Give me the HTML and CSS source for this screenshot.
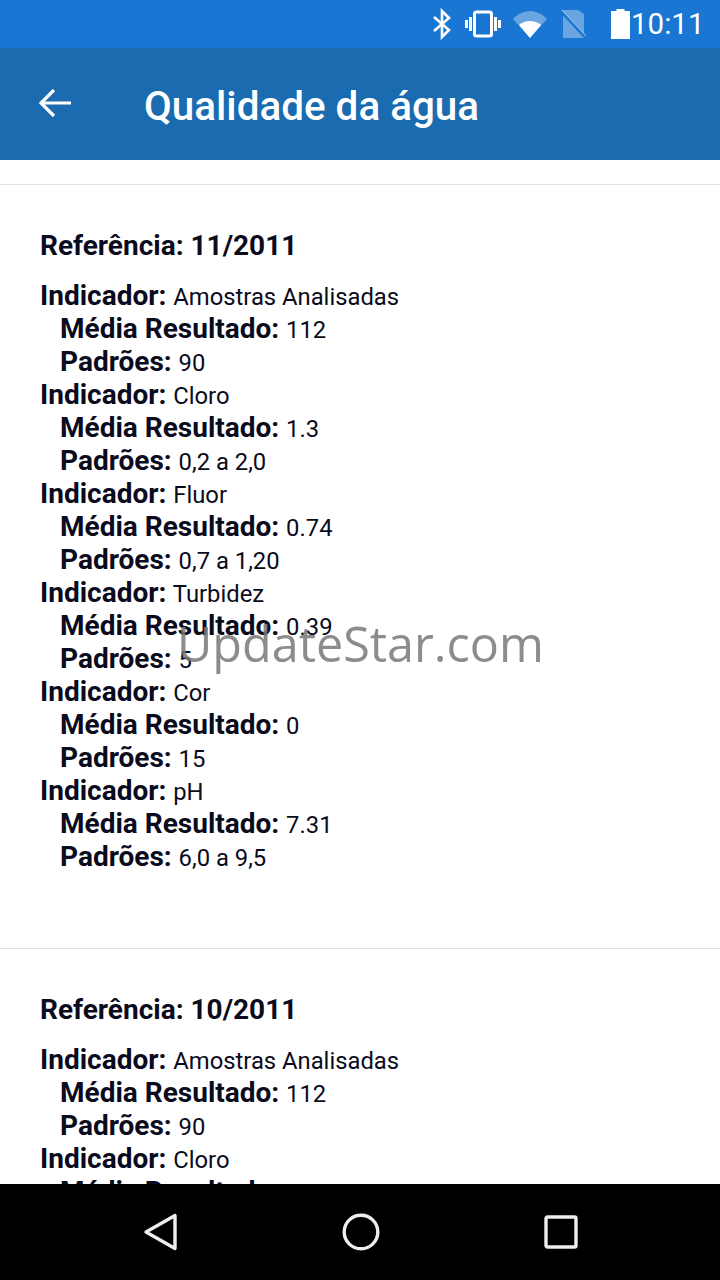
FILE: index.html
```html
<!DOCTYPE html>
<html lang="pt">

<head>
  <meta charset="UTF-8" />
  <title>Qualidade da água</title>
  <link rel="stylesheet" href="styles.css">
</head>

<body>
  <div class="status-bar">
    <svg class="ic-bt" width="24" height="32" viewBox="0 0 24 32">
      <path d="M4 9 L19 22 L12 29 V3 L19 10 L4 23" fill="none" stroke="#fff" stroke-width="2.6" />
    </svg>
    <svg class="ic-vib" width="36" height="28" viewBox="0 0 36 28">
      <rect x="9.500" y="2" width="17" height="24" rx="2" fill="none" stroke="#fff" stroke-width="3" />
      <path d="M5.500 7 V21 M1.500 10 V18 M30.500 7 V21 M34.500 10 V18" stroke="#fff" stroke-width="3" />
    </svg>
    <svg class="ic-wifi" width="34" height="28" viewBox="0 0 34 28">
      <path d="M0 9 C9.500 -1.500 24.500 -1.500 34 9 L17 28 Z" fill="#fff" opacity="0.35" />
      <path d="M6 15 C12.500 9.500 21.500 9.500 28 15 L17 28 Z" fill="#fff" />
    </svg>
    <svg class="ic-sim" width="28" height="30" viewBox="0 0 28 30">
      <path d="M4 1 H19 L25 5 V29 H4 Z" fill="#fff" opacity="0.35" />
      <path d="M1 1 L27 29" stroke="#1976d2" stroke-width="3" />
      <path d="M2.500 0.500 L27 27" stroke="#fff" stroke-width="1.200" opacity="0.35" />
    </svg>
    <svg class="ic-bat" width="19" height="30" viewBox="0 0 19 30">
      <path d="M5.500 0 H13.500 V2 H19 V30 H0 V2 H5.500 Z" fill="#fff" />
    </svg>
    <span class="clock">10:11</span>
  </div>

  <header class="app-bar">
    <svg class="back" width="34" height="32" viewBox="0 0 34 32">
      <path d="M33 16 H3 M16 3 L3 16 L16 29" fill="none" stroke="#fff" stroke-width="3.200" />
    </svg>
    <h1>Qualidade da água</h1>
  </header>

  <main class="lista">
    <section class="card">
      <h2>Referência: 11/2011</h2>
      <p class="ind"><b>Indicador:</b> Amostras Analisadas</p>
      <p class="sub"><b>Média Resultado:</b> 112</p>
      <p class="sub"><b>Padrões:</b> 90</p>
      <p class="ind"><b>Indicador:</b> Cloro</p>
      <p class="sub"><b>Média Resultado:</b> 1.3</p>
      <p class="sub"><b>Padrões:</b> 0,2 a 2,0</p>
      <p class="ind"><b>Indicador:</b> Fluor</p>
      <p class="sub"><b>Média Resultado:</b> 0.74</p>
      <p class="sub"><b>Padrões:</b> 0,7 a 1,20</p>
      <p class="ind"><b>Indicador:</b> Turbidez</p>
      <p class="sub"><b>Média Resultado:</b> 0.39</p>
      <p class="sub"><b>Padrões:</b> 5</p>
      <p class="ind"><b>Indicador:</b> Cor</p>
      <p class="sub"><b>Média Resultado:</b> 0</p>
      <p class="sub"><b>Padrões:</b> 15</p>
      <p class="ind"><b>Indicador:</b> pH</p>
      <p class="sub"><b>Média Resultado:</b> 7.31</p>
      <p class="sub"><b>Padrões:</b> 6,0 a 9,5</p>
    </section>

    <section class="card">
      <h2>Referência: 10/2011</h2>
      <p class="ind"><b>Indicador:</b> Amostras Analisadas</p>
      <p class="sub"><b>Média Resultado:</b> 112</p>
      <p class="sub"><b>Padrões:</b> 90</p>
      <p class="ind"><b>Indicador:</b> Cloro</p>
      <p class="sub"><b>Média Resultado:</b> 1.1</p>
    </section>
  </main>

  <nav class="nav-bar">
    <svg width="36" height="38" viewBox="0 0 36 38">
      <path d="M3 19 L32 2.500 V35.500 Z" fill="none" stroke="#eee" stroke-width="3.400" stroke-linejoin="round" />
    </svg>
    <svg width="38" height="38" viewBox="0 0 38 38">
      <circle cx="19" cy="19" r="16.800" fill="none" stroke="#eee" stroke-width="3.400" />
    </svg>
    <svg width="34" height="34" viewBox="0 0 34 34">
      <rect x="2" y="2" width="30" height="30" rx="1.500" fill="none" stroke="#eee" stroke-width="3.400" />
    </svg>
  </nav>

  <div class="marca">UpdateStar.com</div>
</body>

</html>
```

FILE: styles.css
```css
* {
  box-sizing: border-box;
}

html,
body {
  margin: 0;
  height: 100%;
}

body {
  display: flex;
  flex-direction: column;
  height: 1280px;
  overflow: hidden;
  position: relative;
  background: white;
  font-family: Roboto, "Liberation Sans", sans-serif;
  color: #0b0b20;
}

.status-bar {
  height: 48px;
  flex: none;
  background: #1976d2;
  display: flex;
  align-items: center;
  color: white;
  padding-left: 430px;
}

.ic-vib {
  margin-left: 11px;
}

.ic-wifi {
  margin-left: 12px;
}

.ic-sim {
  margin-left: 12px;
}

.ic-bat {
  margin-left: 24px;
}

.clock {
  font-size: 29.5px;
  margin-left: 1px;
}

.app-bar {
  height: 112px;
  flex: none;
  background: #1a6baf;
  display: flex;
  align-items: center;
  padding-left: 38px;
  padding-top: 4px;
}

.back {
  margin-bottom: 6px;
}

.app-bar h1 {
  margin: 0 0 0 72px;
  font-size: 40.4px;
  font-weight: 500;
  color: white;
}

.lista {
  flex: 1;
  overflow: hidden;
  padding-top: 24px;
}

.card {
  border-top: 1px solid #e0e0e0;
  padding: 44px 40px 73px;
}

.card h2 {
  margin: 0 0 18px;
  font-size: 28px;
  line-height: 34px;
  font-weight: 700;
}

.card p {
  margin: 0;
  font-size: 23.8px;
  line-height: 33px;
}

.card b {
  font-size: 28px;
  line-height: 1;
  margin-right: 1px;
}

.sub {
  padding-left: 20px;
}

.nav-bar {
  height: 96px;
  flex: none;
  background: black;
  display: flex;
  align-items: center;
  justify-content: center;
  position: relative;
}

.nav-bar svg:nth-child(1) {
  margin-right: 163px;
}

.nav-bar svg:nth-child(2) {
  margin-right: 164px;
}

.marca {
  position: absolute;
  left: 177px;
  top: 611px;
  font-family: "Open Sans", sans-serif;
  font-size: 48.5px;
  line-height: 64px;
  color: rgba(120, 120, 120, 0.85);
}
```
